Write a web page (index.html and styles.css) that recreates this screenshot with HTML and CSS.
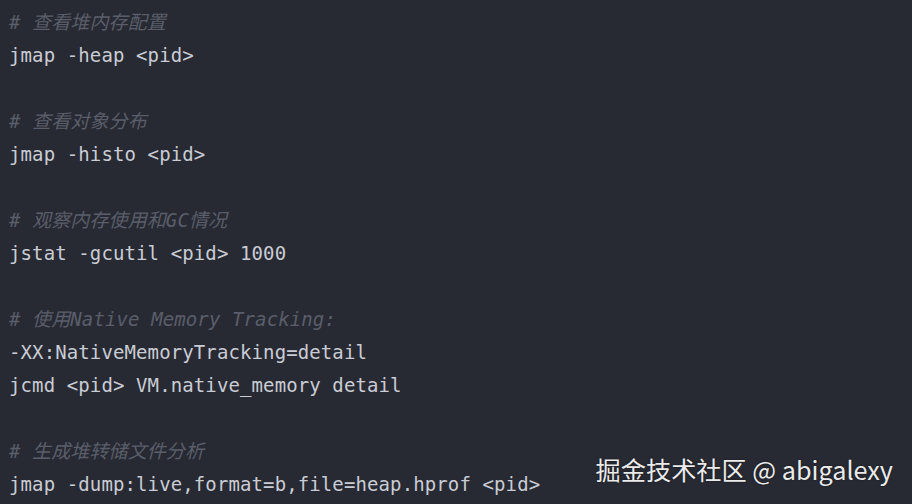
FILE: index.html
```html
<!DOCTYPE html>
<html lang="zh">
<head>
<meta charset="utf-8">
<link rel="stylesheet" href="styles.css">
</head>
<body>
<div class="code"><div class="line cm"># 查看堆内存配置</div><div class="line">jmap -heap &lt;pid&gt;</div><div class="line"></div><div class="line cm"># 查看对象分布</div><div class="line">jmap -histo &lt;pid&gt;</div><div class="line"></div><div class="line cm"># 观察内存使用和GC情况</div><div class="line">jstat -gcutil &lt;pid&gt; 1000</div><div class="line"></div><div class="line cm"># 使用Native Memory Tracking:</div><div class="line">-XX:NativeMemoryTracking=detail</div><div class="line">jcmd &lt;pid&gt; VM.native_memory detail</div><div class="line"></div><div class="line cm"># 生成堆转储文件分析</div><div class="line">jmap -dump:live,format=b,file=heap.hprof &lt;pid&gt;</div></div>
<div class="watermark">掘金技术社区 @ abigalexy</div>
</body>
</html>
```
FILE: styles.css
```css
html, body {
  margin: 0;
  padding: 0;
  width: 912px;
  height: 504px;
  overflow: hidden;
  background: #282a33;
}
body {
  position: relative;
}
.code {
  padding: 6px 0 0 9px;
  font-family: "DejaVu Sans Mono", "Noto Sans CJK SC", monospace;
  font-size: 19px;
  letter-spacing: 0.11px;
  color: #c9ccd4;
}
.line {
  height: 33px;
  line-height: 33px;
  white-space: pre;
}
.cm {
  color: #595e6a;
  font-style: italic;
}
.watermark {
  position: absolute;
  right: 19px;
  bottom: 20px;
  font-family: "Noto Sans CJK SC", "Noto Sans", sans-serif;
  font-size: 25.2px;
  color: #ebebeb;
  text-shadow: 0 0 2px rgba(0,0,0,0.5);
  line-height: 30px;
}
```
